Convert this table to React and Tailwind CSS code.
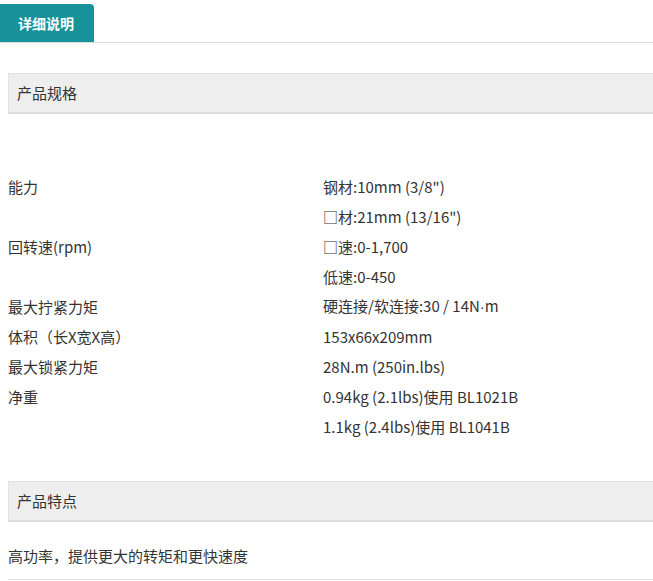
import React from 'react';

const specs = [
  ['能力', '钢材:10mm (3/8")'],
  ['', '□材:21mm (13/16")'],
  ['回转速(rpm)', '□速:0-1,700'],
  ['', '低速:0-450'],
  ['最大拧紧力矩', <>硬连接/软连接:30 / 14N<span style={{ fontFamily: '"Liberation Sans", sans-serif' }}>·</span>m</>],
  ['体积（长X宽X高）', '153x66x209mm'],
  ['最大锁紧力矩', '28N.m (250in.lbs)'],
  ['净重', '0.94kg (2.1lbs)使用 BL1021B'],
  ['', '1.1kg (2.4lbs)使用 BL1041B'],
];

const SectionHeader = ({ title }) => (
  <div className="h-[41px] flex items-center pl-[8px] bg-[#eeeeee] border-t border-l border-[#e2e2e2] border-b-2 border-b-[#dddddd] text-[15px] text-[#333]">
    {title}
  </div>
);

export default function App() {
  return (
    <div
      className="w-[653px] h-[581px] overflow-hidden bg-white text-[#333] text-[15px]"
      style={{ fontFamily: '"Microsoft YaHei", "Noto Sans CJK SC", sans-serif' }}
    >
      {/* tab bar */}
      <div className="pt-[4px] flex items-end border-b border-[#dddddd]">
        <div className="w-[94px] h-[38px] flex items-center pl-[18px] bg-[#17919a] rounded-tr-[4px] text-white text-[14px] font-bold">
          详细说明
        </div>
      </div>

      <div className="pl-[8px]">
        <div className="mt-[30px]">
          <SectionHeader title="产品规格" />
        </div>

        <div className="mt-[58px]">
          {specs.map(([label, value], i) => (
            <div key={i} className="h-[30px] flex items-center">
              <div className="w-[315px]">{label}</div>
              <div>{value}</div>
            </div>
          ))}
        </div>

        <div className="mt-[39px]">
          <SectionHeader title="产品特点" />
        </div>

        <div className="h-[58px] pt-[12px] flex items-center border-b border-[#e2e2e2]">
          高功率，提供更大的转矩和更快速度
        </div>
      </div>
    </div>
  );
}
